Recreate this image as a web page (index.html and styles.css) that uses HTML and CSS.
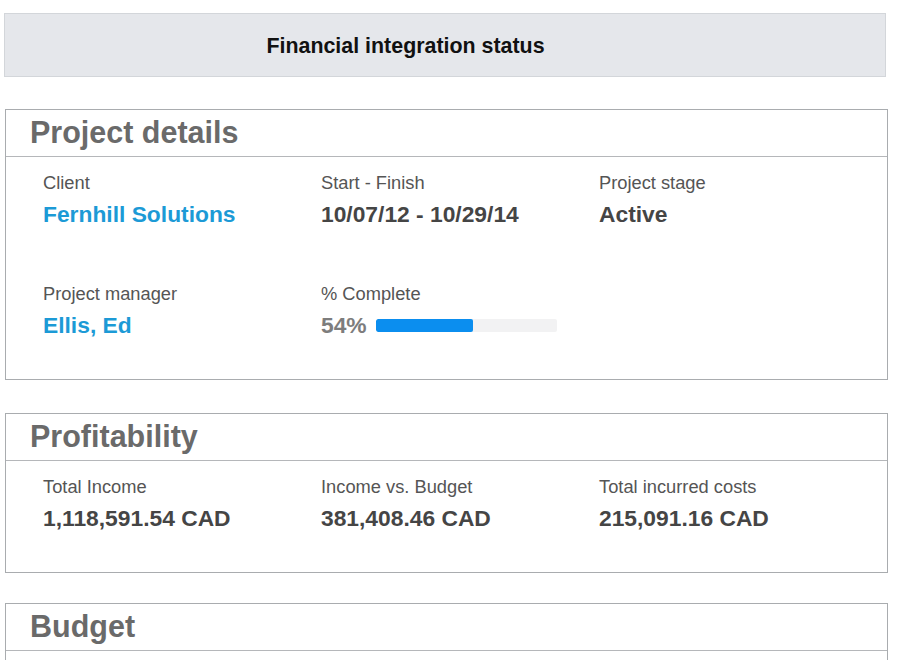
FILE: index.html
```html
<!DOCTYPE html>
<html lang="en">
<head>
<meta charset="utf-8">
<title>Financial integration status</title>
<link rel="stylesheet" href="styles.css">
</head>
<body>
  <div class="topbar">Financial integration status</div>

  <section class="panel">
    <h2 class="panel-title">Project details</h2>
    <div class="panel-body grid rows2">
      <div class="field">
        <div class="label">Client</div>
        <div class="value link">Fernhill Solutions</div>
      </div>
      <div class="field">
        <div class="label">Start - Finish</div>
        <div class="value">10/07/12 - 10/29/14</div>
      </div>
      <div class="field">
        <div class="label">Project stage</div>
        <div class="value">Active</div>
      </div>
      <div class="field">
        <div class="label">Project manager</div>
        <div class="value link">Ellis, Ed</div>
      </div>
      <div class="field">
        <div class="label">% Complete</div>
        <div class="value progress-row">
          <span class="pct">54%</span>
          <span class="track"><span class="fill" style="width:54%"></span></span>
        </div>
      </div>
    </div>
  </section>

  <section class="panel">
    <h2 class="panel-title">Profitability</h2>
    <div class="panel-body grid">
      <div class="field">
        <div class="label">Total Income</div>
        <div class="value">1,118,591.54 CAD</div>
      </div>
      <div class="field">
        <div class="label">Income vs. Budget</div>
        <div class="value">381,408.46 CAD</div>
      </div>
      <div class="field">
        <div class="label">Total incurred costs</div>
        <div class="value">215,091.16 CAD</div>
      </div>
    </div>
  </section>

  <section class="panel last">
    <h2 class="panel-title">Budget</h2>
    <div class="panel-body empty"></div>
  </section>
</body>
</html>
```

FILE: styles.css
```css
html, body {
  margin: 0;
  padding: 0;
  background: #ffffff;
}

body {
  font-family: "Liberation Sans", Arial, sans-serif;
  padding-top: 13px;
  overflow: hidden;
}

.topbar {
  margin: 0 14px 0 4px;
  height: 60px;
  padding-top: 2px;
  background: #e5e7eb;
  border: 1px solid #d3d6da;
  box-sizing: content-box;
  text-align: center;
  padding-right: 79px;
  line-height: 60px;
  font-size: 21.4px;
  font-weight: bold;
  color: #111111;
}

.panel {
  margin: 32px 12px 0 5px;
  border: 1px solid #a9acaf;
}

.panel + .panel {
  margin-top: 33px;
}

.panel.last {
  margin-top: 30px;
}

.panel-title {
  margin: 0;
  height: 46px;
  line-height: 45px;
  padding-left: 24px;
  font-size: 30.5px;
  font-weight: bold;
  color: #6a6a6a;
  border-bottom: 1px solid #b5b7ba;
}

.panel-body {
  padding: 16px 0 41px 37px;
}

.grid {
  display: grid;
  grid-template-columns: 278px 278px 278px;
  row-gap: 57px;
}

.field {
  display: flex;
  flex-direction: column;
  gap: 8px;
}

.label {
  font-size: 18.3px;
  line-height: 20px;
  color: #555555;
}

.value {
  font-size: 22.8px;
  line-height: 26px;
  font-weight: bold;
  color: #454545;
}

.value.link {
  color: #1c9ad6;
}

.progress-row {
  display: flex;
  align-items: center;
  gap: 9px;
}

.pct {
  color: #7d7d7d;
}

.track {
  display: block;
  width: 181px;
  height: 13px;
  background: #f2f2f3;
  border-radius: 2px;
  overflow: hidden;
}

.fill {
  display: block;
  height: 100%;
  background: #0b8eef;
  border-radius: 2px;
}

.empty {
  height: 200px;
  padding: 0;
}
```
